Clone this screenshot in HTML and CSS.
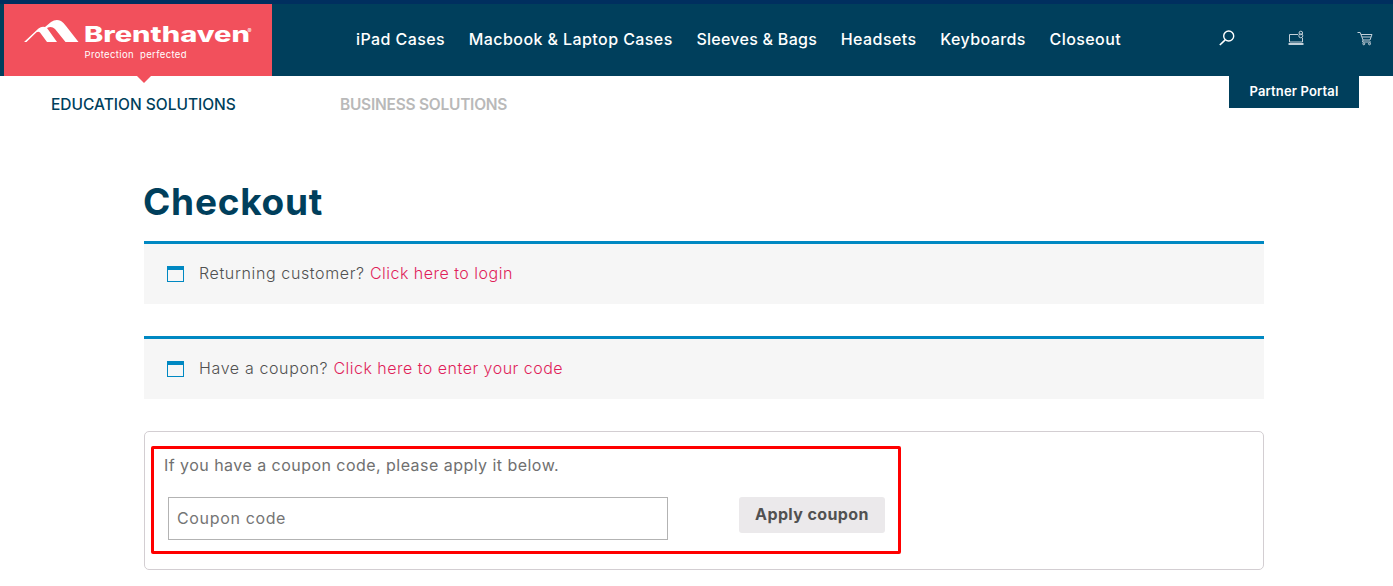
FILE: index.html
```html
<!DOCTYPE html>
<html lang="en">
<head>
  <meta charset="utf-8">
  <title>Checkout - Brenthaven</title>
  <link rel="stylesheet" href="styles.css">
</head>
<body>
  <header class="header">
    <a class="logo" href="#">
      <svg width="268" height="72" viewBox="0 0 268 72">
        <path fill="#fff" d="M20 38 L34.5 24.5 Q37.5 22 41 23 L47 18 Q52 14.5 57 17 Q60 19 62 22 L74.5 38 H61.5 L51 25 Q47.5 21.5 43 24 L53 38 H43 L36 28.5 Q34.5 27 32.5 28.2 L22.5 38 Z"/>
        <text class="logo-name" x="80" y="38" textLength="166" lengthAdjust="spacingAndGlyphs">Brenthaven</text>
        <text class="logo-reg" x="243.5" y="29">®</text>
        <text class="logo-tag" x="80.5" y="54" textLength="102">Protection  perfected</text>
      </svg>
    </a>
    <nav class="main-nav">
      <a href="#">iPad Cases</a>
      <a href="#">Macbook &amp; Laptop Cases</a>
      <a class="nav-sleeves" href="#">Sleeves &amp; Bags</a>
      <a href="#">Headsets</a>
      <a href="#">Keyboards</a>
      <a href="#">Closeout</a>
    </nav>
    <div class="tools">
      <svg width="16" height="16" viewBox="0 0 16 16" fill="none" stroke="#fff">
        <circle cx="9.7" cy="6" r="5" stroke-width="1.4"/>
        <path d="M6.2 9.8 L0.8 15" stroke-width="1.6"/>
      </svg>
      <svg width="16" height="16" viewBox="0 0 16 16" fill="none" stroke="#c3d0d9">
        <path d="M10 4.5 H1.5 V12 H14.5 V8"/>
        <path d="M0.5 14 H15.5" stroke-width="2"/>
        <circle cx="12.8" cy="3" r="1.8"/>
        <circle cx="12.8" cy="5.8" r="2"/>
      </svg>
      <svg width="16" height="16" viewBox="0 0 16 16" fill="none" stroke="#c3d0d9">
        <path d="M0.5 2.5 H3.2 L6 10 H13 L15 4.5 H4"/>
        <path d="M6 10 L5.5 12 H14 M5 7 H14"/>
        <circle cx="6.8" cy="13.8" r="1"/>
        <circle cx="12.5" cy="13.8" r="1"/>
      </svg>
    </div>
  </header>

  <div class="sub-header">
    <a class="solution active" href="#">EDUCATION SOLUTIONS</a>
    <a class="solution" href="#">BUSINESS SOLUTIONS</a>
    <a class="portal" href="#">Partner Portal</a>
  </div>

  <main class="content">
    <h1>Checkout</h1>

    <div class="notice">
      <i class="notice-icon"></i>
      <p>Returning customer? <a href="#">Click here to login</a></p>
    </div>

    <div class="notice">
      <i class="notice-icon"></i>
      <p>Have a coupon? <a href="#">Click here to enter your code</a></p>
    </div>

    <form class="coupon">
      <div class="coupon-box">
        <p class="coupon-text">If you have a coupon code, please apply it below.</p>
        <div class="coupon-row">
          <input type="text" placeholder="Coupon code">
          <button type="button">Apply coupon</button>
        </div>
      </div>
    </form>
  </main>
</body>
</html>
```
FILE: styles.css
```css
* {
  box-sizing: border-box;
}

body {
  margin: 0;
  font-family: Inter, "Open Sans", sans-serif;
  font-size: 16px;
  color: #515151;
  background-color: #fff;
}

a {
  text-decoration: none;
}

.header {
  display: flex;
  height: 76px;
  padding-left: 4px;
  border-top: 4px solid #002f5f;
  background-color: #003f5c;
}

.logo {
  position: relative;
  width: 268px;
  height: 72px;
  background-color: #f2505c;
}

.logo svg {
  display: block;
}

.logo::after {
  content: "";
  position: absolute;
  top: 72px;
  left: 133px;
  border: 7px solid transparent;
  border-top-color: #f2505c;
  border-bottom: 0;
}

.logo-name {
  font-size: 21px;
  font-weight: 800;
  fill: #fff;
}

.logo-reg {
  font-size: 6px;
  fill: #fff;
}

.logo-tag {
  font-size: 9.5px;
  white-space: pre;
  fill: #fff;
}

.main-nav {
  display: flex;
  align-items: center;
  gap: 23.7px;
  height: 70px;
  margin-left: 84px;
}

.main-nav a {
  font-weight: 500;
  letter-spacing: 0.42px;
  white-space: nowrap;
  color: #fff;
}

.main-nav .nav-sleeves {
  letter-spacing: 0.27px;
}

.tools {
  display: flex;
  gap: 53px;
  margin-left: auto;
  padding: 26px 20px 0 0;
}

.sub-header {
  display: flex;
  height: 32px;
  padding: 0 34px 0 51px;
}

.solution {
  padding-top: 19px;
  font-size: 15.5px;
  font-weight: 600;
  line-height: 20px;
  letter-spacing: -0.25px;
  white-space: nowrap;
  color: #b9b9b9;
}

.solution.active {
  width: 289px;
  font-weight: 500;
  letter-spacing: 0;
  color: #003f5c;
}

.portal {
  width: 130px;
  margin-left: auto;
  font-size: 13px;
  font-weight: 600;
  line-height: 31px;
  letter-spacing: 0.15px;
  text-align: center;
  color: #fff;
  background-color: #003f5c;
}

.content {
  width: 1120px;
  margin: 0 0 0 144px;
  padding-top: 70px;
}

h1 {
  height: 63px;
  margin: 0 0 0 -1px;
  font-size: 37px;
  font-weight: 700;
  line-height: 48px;
  letter-spacing: 0.75px;
  color: #003f5c;
}

.notice {
  display: flex;
  align-items: center;
  height: 63px;
  margin-bottom: 32px;
  padding: 0 0 2px 23px;
  border-top: 3px solid #0088c2;
  background-color: #f6f6f6;
}

.notice p {
  margin: 0 0 0 15px;
  font-weight: 300;
  letter-spacing: 0.63px;
}

.notice a {
  letter-spacing: 0.49px;
  color: #e01e5a;
}

.notice-icon {
  width: 17px;
  height: 16px;
  margin-top: 1px;
  border: 1px solid #0088c2;
  border-top-width: 4px;
}

.coupon {
  height: 139px;
  padding: 14px 6px;
  border: 1px solid #d3ced2;
  border-radius: 5px;
}

.coupon-box {
  width: 750px;
  height: 108px;
  padding: 4px 10px 0;
  border: 3px solid #ff0000;
  border-radius: 2px;
}

.coupon-text {
  margin: 0;
  line-height: 24px;
  letter-spacing: 0.46px;
  color: #707070;
}

.coupon-row {
  display: flex;
  align-items: flex-start;
  margin: 20px 0 0 4px;
}

.coupon input {
  width: 500px;
  height: 43px;
  padding: 0 8px 2px;
  border: 1px solid #b3b3b3;
  font-family: inherit;
  font-size: 16px;
  letter-spacing: 0.65px;
}

.coupon input::placeholder {
  color: #757575;
}

.coupon button {
  flex: none;
  width: 146px;
  height: 36px;
  margin-left: 71px;
  padding: 0 0 2px;
  border: 0;
  border-radius: 3px;
  font-family: inherit;
  font-size: 16px;
  font-weight: 700;
  letter-spacing: 0.4px;
  color: #515151;
  background-color: #ebe9eb;
}
```
